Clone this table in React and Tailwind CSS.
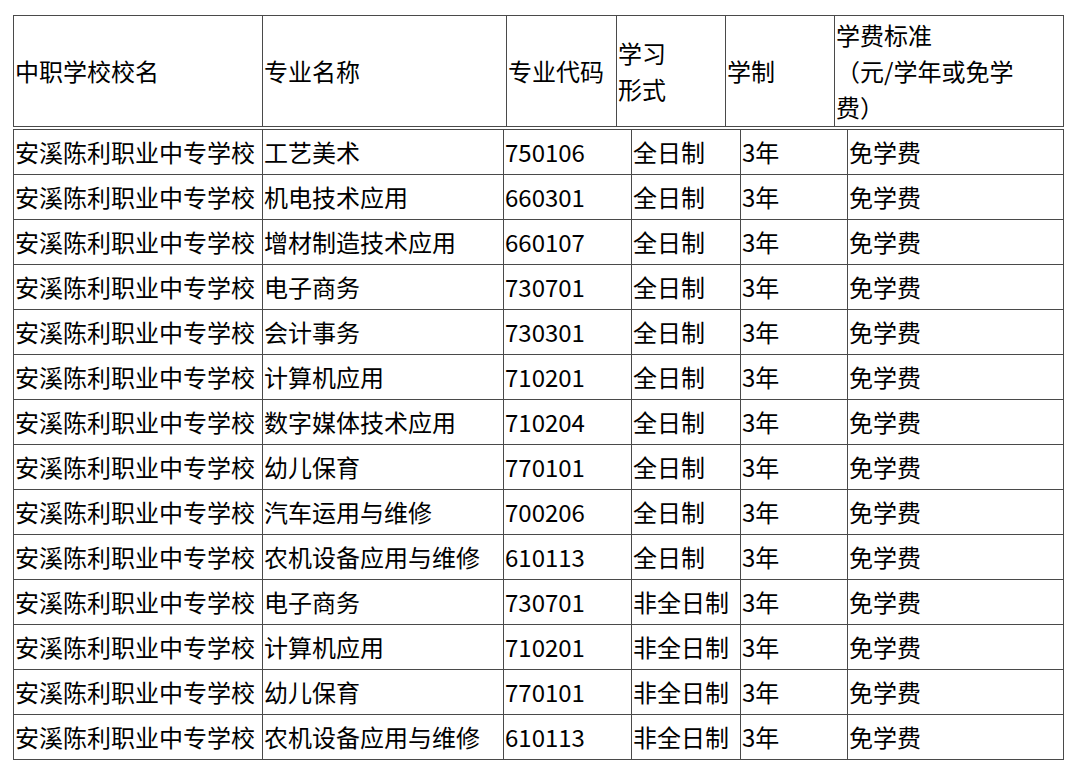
const rows = [
  ["工艺美术", "750106", "全日制"],
  ["机电技术应用", "660301", "全日制"],
  ["增材制造技术应用", "660107", "全日制"],
  ["电子商务", "730701", "全日制"],
  ["会计事务", "730301", "全日制"],
  ["计算机应用", "710201", "全日制"],
  ["数字媒体技术应用", "710204", "全日制"],
  ["幼儿保育", "770101", "全日制"],
  ["汽车运用与维修", "700206", "全日制"],
  ["农机设备应用与维修", "610113", "全日制"],
  ["电子商务", "730701", "非全日制"],
  ["计算机应用", "710201", "非全日制"],
  ["幼儿保育", "770101", "非全日制"],
  ["农机设备应用与维修", "610113", "非全日制"],
];

const cell = "border border-[#4a4a4a] pl-[1px] pr-0 py-0 align-middle whitespace-nowrap";

export default function App() {
  return (
    <div className="bg-white min-h-[771px] pt-[15px] pl-[13px] text-[24px] leading-[36px] text-black font-['Noto_Sans_CJK_SC','Noto_Sans',sans-serif]">
      <table className="table-fixed border-collapse w-[1050px]">
        <colgroup>
          <col className="w-[249px]" />
          <col className="w-[244px]" />
          <col className="w-[110px]" />
          <col className="w-[109px]" />
          <col className="w-[109px]" />
          <col className="w-[229px]" />
        </colgroup>
        <tbody>
          <tr className="h-[111px]">
            <td className={cell}>中职学校校名</td>
            <td className={cell}>专业名称</td>
            <td className={cell}>专业代码</td>
            <td className={cell}>
              学习
              <br />
              形式
            </td>
            <td className={cell}>学制</td>
            <td className={cell}>
              学费标准
              <br />
              （元/学年或免学
              <br />
              费）
            </td>
          </tr>
        </tbody>
      </table>
      <table className="table-fixed border-collapse w-[1050px] mt-[2px]">
        <colgroup>
          <col className="w-[249px]" />
          <col className="w-[241px]" />
          <col className="w-[128px]" />
          <col className="w-[109px]" />
          <col className="w-[107px]" />
          <col className="w-[216px]" />
        </colgroup>
        <tbody>
          {rows.map(([major, code, form], i) => (
            <tr key={i} className="h-[45px]">
              <td className={cell}>安溪陈利职业中专学校</td>
              <td className={cell}>{major}</td>
              <td className={cell}>{code}</td>
              <td className={cell}>{form}</td>
              <td className={cell}>3年</td>
              <td className={cell}>免学费</td>
            </tr>
          ))}
        </tbody>
      </table>
    </div>
  );
}
